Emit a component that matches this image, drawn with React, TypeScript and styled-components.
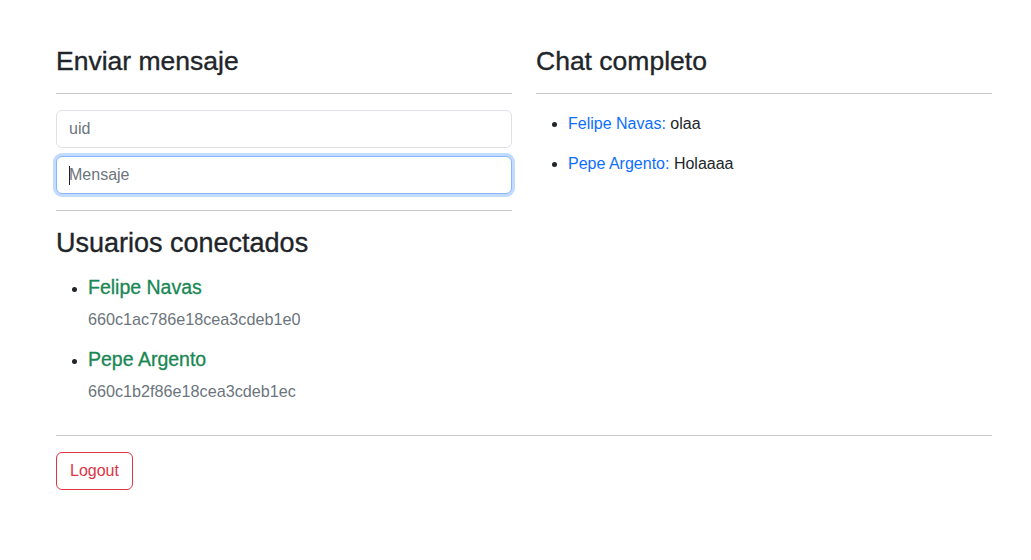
import React from "react";
import styled, { createGlobalStyle } from "styled-components";

const GlobalStyle = createGlobalStyle`
  html, body {
    margin: 0;
    padding: 0;
    background: #ffffff;
    color: #212529;
    font-family: "Liberation Sans", Arial, sans-serif;
    font-size: 16px;
    line-height: 24px;
  }
  * { box-sizing: border-box; }
`;

const Page = styled.div`
  width: 936px;
  margin: 0 0 0 56px;
  padding-top: 45px;
`;

const Row = styled.div`
  display: grid;
  grid-template-columns: 456px 456px;
  column-gap: 24px;
`;

const Column = styled.div`
  display: flex;
  flex-direction: column;
`;

const Heading = styled.h2<{ $size?: number }>`
  margin: 0;
  font-size: ${(p) => p.$size ?? 26.5}px;
  line-height: 32px;
  font-weight: 400;
  color: #212529;
  -webkit-text-stroke: 0.35px #212529;
`;

const Rule = styled.hr<{ $top?: number; $bottom?: number }>`
  margin: ${(p) => p.$top ?? 16}px 0 ${(p) => p.$bottom ?? 16}px;
  border: 0;
  border-top: 1px solid #c8c9ca;
  height: 0;
`;

const Field = styled.div<{ $mb?: number }>`
  position: relative;
  margin-bottom: ${(p) => p.$mb ?? 0}px;
`;

const Input = styled.input<{ $focused?: boolean }>`
  display: block;
  width: 100%;
  height: 38px;
  padding: 6px 12px;
  font-family: inherit;
  font-size: 16px;
  line-height: 24px;
  color: #212529;
  background: #fff;
  border: 1px solid ${(p) => (p.$focused ? "#86b7fe" : "#dee2e6")};
  border-radius: 6px;
  outline: none;
  box-shadow: ${(p) => (p.$focused ? "0 0 0 3px rgba(13,110,253,0.25)" : "none")};
  &::placeholder {
    color: #6c757d;
  }
`;

const Caret = styled.span`
  position: absolute;
  left: 13px;
  top: 10px;
  width: 1px;
  height: 19px;
  background: #212529;
`;

const List = styled.ul<{ $mt?: number }>`
  margin: ${(p) => p.$mt ?? 0}px 0 0;
  padding-left: 32px;
`;

const UserItem = styled.li`
  margin-bottom: 16px;
  &:last-child { margin-bottom: 0; }
`;

const UserName = styled.div`
  font-size: 19.5px;
  line-height: 24px;
  color: #198754;
  -webkit-text-stroke: 0.3px #198754;
`;

const UserId = styled.div`
  margin-top: 8px;
  font-size: 16.2px;
  line-height: 24px;
  color: #6c757d;
`;

const ChatItem = styled.li`
  font-size: 16px;
  line-height: 24px;
  margin-bottom: 16px;
`;

const Author = styled.span`
  color: #0d6efd;
`;

const LogoutButton = styled.button`
  display: inline-block;
  padding: 6px 13px;
  height: 38px;
  font-family: inherit;
  font-size: 16px;
  line-height: 24px;
  color: #dc3545;
  background: transparent;
  border: 1px solid #dc3545;
  border-radius: 6px;
  cursor: pointer;
`;

const Footer = styled.div`
  display: flex;
`;

const users = [
  { name: "Felipe Navas", id: "660c1ac786e18cea3cdeb1e0" },
  { name: "Pepe Argento", id: "660c1b2f86e18cea3cdeb1ec" },
];

const messages = [
  { author: "Felipe Navas", text: "olaa" },
  { author: "Pepe Argento", text: "Holaaaa" },
];

export default function App() {
  return (
    <>
      <GlobalStyle />
      <Page>
        <Row>
          <Column>
            <Heading>Enviar mensaje</Heading>
            <Rule />
            <Field $mb={8}>
              <Input placeholder="uid" readOnly />
            </Field>
            <Field>
              <Input placeholder="Mensaje" $focused readOnly />
              <Caret />
            </Field>
            <Rule />
            <Heading as="h3" $size={27}>Usuarios conectados</Heading>
            <List $mt={16}>
              {users.map((u) => (
                <UserItem key={u.id}>
                  <UserName>{u.name}</UserName>
                  <UserId>{u.id}</UserId>
                </UserItem>
              ))}
            </List>
          </Column>
          <Column>
            <Heading>Chat completo</Heading>
            <Rule $bottom={18} />
            <List>
              {messages.map((m, i) => (
                <ChatItem key={i}>
                  <Author>{m.author}:</Author> {m.text}
                </ChatItem>
              ))}
            </List>
          </Column>
        </Row>
        <Rule $top={32} />
        <Footer>
          <LogoutButton>Logout</LogoutButton>
        </Footer>
      </Page>
    </>
  );
}
